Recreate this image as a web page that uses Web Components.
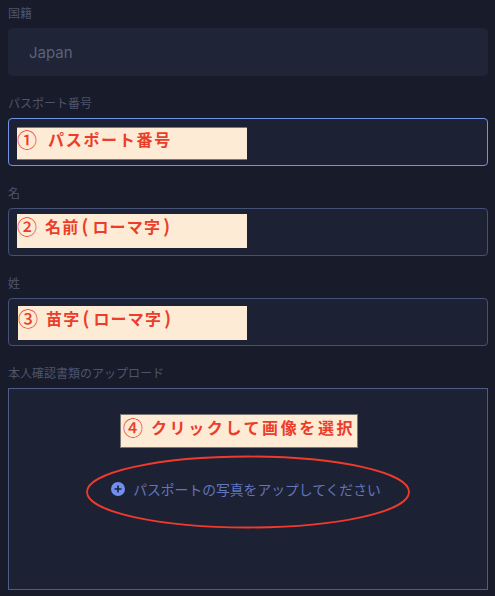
<!DOCTYPE html>
<html lang="ja">
<head>
<meta charset="utf-8">
<title>本人確認</title>
<style>
  html, body { margin: 0; background: #181b2a; }
  body { font-family: Inter, "Noto Sans CJK JP", sans-serif; height: 596px; overflow: hidden; }
</style>
</head>
<body>
<kyc-form>
  <form-field label="国籍" kind="disabled" value="Japan"></form-field>
  <form-field label="パスポート番号" kind="focus">
    <note-mark style="left:8px;top:8px;width:230px;height:33px" edge><span class="n wide">①</span>パスポート番号</note-mark>
  </form-field>
  <form-field label="名">
    <note-mark style="left:8px;top:5px;width:230px;height:34px" tight><span class="n">②</span>名前<span class="p">(</span>ローマ字<span class="p">)</span></note-mark>
  </form-field>
  <form-field label="姓">
    <note-mark style="left:9px;top:7px;width:229px;height:34px" tight><span class="n">③</span>苗字<span class="p">(</span>ローマ字<span class="p">)</span></note-mark>
  </form-field>
  <upload-field label="本人確認書類のアップロード" hint="パスポートの写真をアップしてください">
    <note-mark style="left:111px;top:25px;width:238px;height:34px" box><span class="n">④</span>クリックして画像を選択</note-mark>
  </upload-field>
</kyc-form>

<script>
class KycForm extends HTMLElement {
  constructor() {
    super();
    this.attachShadow({ mode: "open" });
    this.shadowRoot.innerHTML = `
      <style>
        :host { display: flex; flex-direction: column; padding: 6px 7px 0 8px; gap: 20px; }
      </style>
      <slot></slot>
    `;
  }
}

class FormField extends HTMLElement {
  constructor() {
    super();
    this.attachShadow({ mode: "open" });
  }

  connectedCallback() {
    this.shadowRoot.innerHTML = `
      <style>
        :host { display: block; }
        .label { font-size: 12px; line-height: 16px; height: 16px; margin-bottom: 6px; color: #4f546d; }
        .box {
          position: relative;
          box-sizing: border-box;
          height: 48px;
          padding: 0 20px;
          border: 1px solid #465178;
          border-radius: 4px;
          background: #1d2134;
          font-size: 15px;
          line-height: 47px;
          color: #5c617c;
        }
        :host([kind="disabled"]) .box { border-color: #1f2538; background: #1f2437; }
        :host([kind="focus"]) .box { border-color: #7392ea; }
      </style>
      <div class="label">${this.getAttribute("label")}</div>
      <div class="box">${this.getAttribute("value") || ""}<slot></slot></div>
    `;
  }
}

class UploadField extends HTMLElement {
  constructor() {
    super();
    this.attachShadow({ mode: "open" });
  }

  connectedCallback() {
    this.shadowRoot.innerHTML = `
      <style>
        :host { display: block; }
        .label { font-size: 12px; line-height: 16px; height: 16px; margin-bottom: 6px; color: #4f546d; }
        .box {
          position: relative;
          box-sizing: border-box;
          height: 202px;
          padding: 91px 4px 0 0;
          border: 1px solid #4f5c88;
          background: #1d2134;
        }
        .hint {
          display: flex;
          align-items: center;
          justify-content: center;
          gap: 8px;
          height: 18px;
          font-size: 13.8px;
          color: #6076bd;
          white-space: nowrap;
        }
        .ring { position: absolute; left: 76px; top: 66px; }
      </style>
      <div class="label">${this.getAttribute("label")}</div>
      <div class="box">
        <div class="hint">
          <svg width="14" height="14" viewBox="0 0 14 14">
            <circle cx="7" cy="7" r="7" fill="#7090f0"/>
            <path d="M3.5 7h7M7 3.5v7" stroke="#1d2134" stroke-width="1.6"/>
          </svg>
          <span>${this.getAttribute("hint")}</span>
        </div>
        <svg class="ring" width="328" height="76" viewBox="0 0 328 76">
          <ellipse cx="163" cy="37" rx="161" ry="35.5" fill="none" stroke="#f03a2c" stroke-width="1.8"/>
        </svg>
        <slot></slot>
      </div>
    `;
  }
}

class NoteMark extends HTMLElement {
  constructor() {
    super();
    this.attachShadow({ mode: "open" });
    this.shadowRoot.innerHTML = `
      <style>
        :host {
          position: absolute;
          box-sizing: border-box;
          background: #fdebd6;
          color: #ec3d2b;
          font-family: "Noto Sans CJK JP", sans-serif;
          font-size: 16px;
          font-weight: 700;
          line-height: 24px;
          letter-spacing: 1.7px;
          white-space: nowrap;
        }
        :host([edge]) { border-top: 1px solid #7c7672; border-bottom: 1px solid #7c7672; line-height: 22px; }
        :host([tight]) { letter-spacing: 1.2px; }
        :host([box]) { border: 1px solid #7c7672; padding-left: 2px; line-height: 24px; letter-spacing: 2.6px; }
        ::slotted(.n) {
          display: inline-block;
          width: 28px;
          font-size: 20px;
          font-weight: 500;
          line-height: 0;
          letter-spacing: 0;
          vertical-align: -2px;
        }
        ::slotted(.wide) { width: 31px; }
        ::slotted(.p) { margin: 0 3px 0 2px; font-size: 18px; line-height: 0; }
      </style>
      <slot></slot>
    `;
  }
}

customElements.define("kyc-form", KycForm);
customElements.define("form-field", FormField);
customElements.define("upload-field", UploadField);
customElements.define("note-mark", NoteMark);
</script>
</body>
</html>
